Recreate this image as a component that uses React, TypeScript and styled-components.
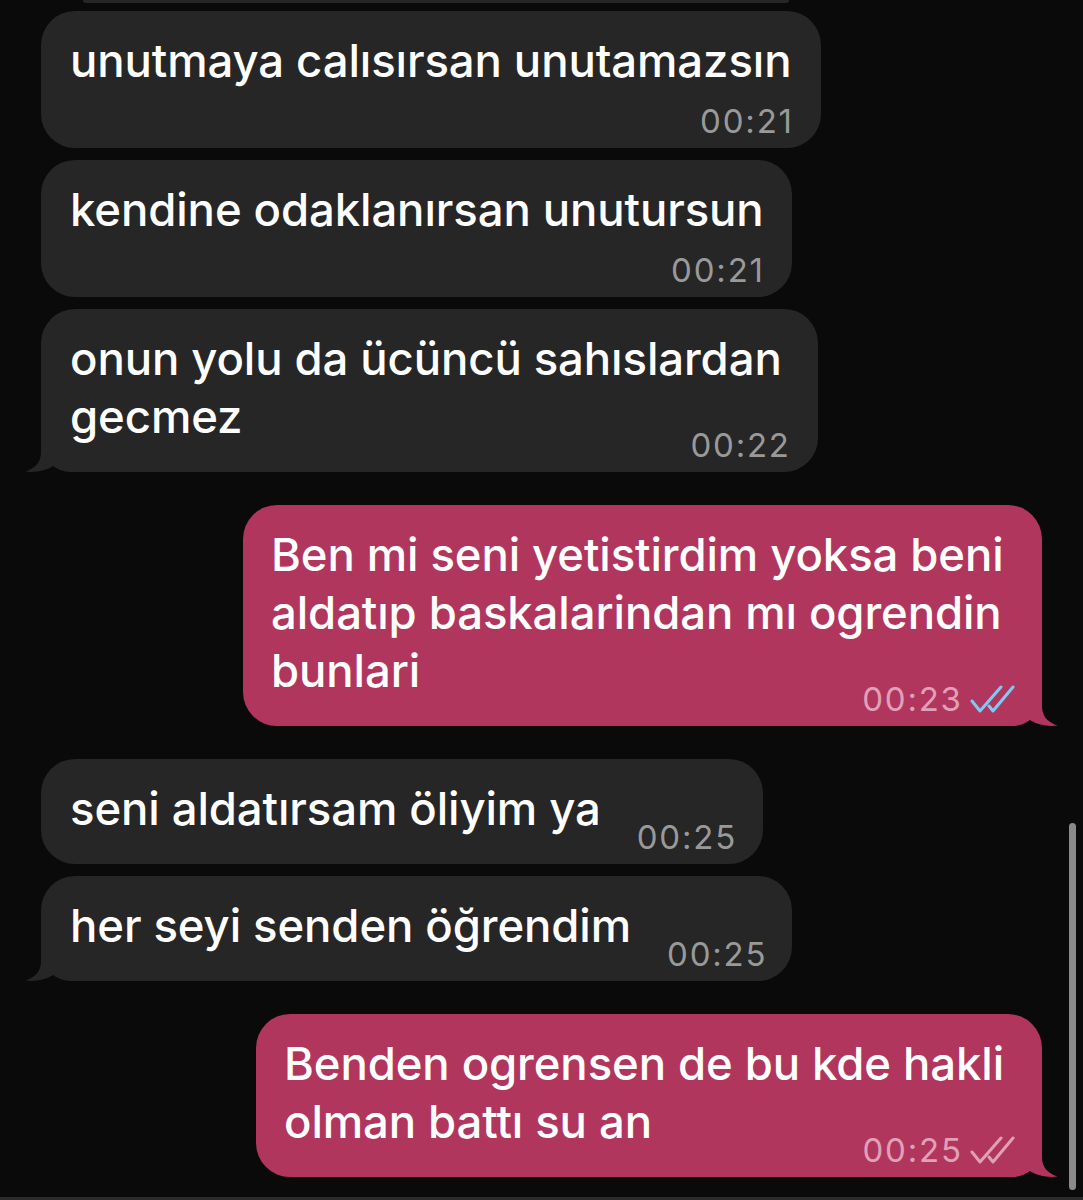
import React, { FC } from 'react';
import styled, { createGlobalStyle } from 'styled-components';

const COLORS = {
  BG: '#0a0a0a',
  INCOMING: '#262626',
  OUTGOING: '#b0365d',
  TIME_IN: '#999999',
  TIME_OUT: '#e0a0b8',
  CHECK_READ: '#7ecaf4',
  SCROLL: '#8a8a8a',
  INPUT_EDGE: '#2b2b2b'
};

const FONT = `Inter, 'Noto Sans', 'Liberation Sans', sans-serif`;

type Sender = 'in' | 'out';
type CheckState = 'read' | 'sent' | null;

interface Message {
  id: number;
  from: Sender;
  lines: string[];
  time: string;
  width: number;
  timeOwnLine?: boolean;
  tail?: boolean;
  check?: CheckState;
  gapTop: number;
}

const MESSAGES: Message[] = [
  {
    id: 1,
    from: 'in',
    lines: ['unutmaya calısırsan unutamazsın'],
    time: '00:21',
    width: 780,
    timeOwnLine: true,
    gapTop: 8
  },
  {
    id: 2,
    from: 'in',
    lines: ['kendine odaklanırsan unutursun'],
    time: '00:21',
    width: 751,
    timeOwnLine: true,
    gapTop: 12
  },
  {
    id: 3,
    from: 'in',
    lines: ['onun yolu da ücüncü sahıslardan', 'gecmez'],
    time: '00:22',
    width: 777,
    tail: true,
    gapTop: 12
  },
  {
    id: 4,
    from: 'out',
    lines: ['Ben mi seni yetistirdim yoksa beni', 'aldatıp baskalarindan mı ogrendin', 'bunlari'],
    time: '00:23',
    width: 799,
    tail: true,
    check: 'read',
    gapTop: 33
  },
  {
    id: 5,
    from: 'in',
    lines: ['seni aldatırsam öliyim ya'],
    time: '00:25',
    width: 722,
    gapTop: 33
  },
  {
    id: 6,
    from: 'in',
    lines: ['her seyi senden öğrendim'],
    time: '00:25',
    width: 751,
    tail: true,
    gapTop: 12
  },
  {
    id: 7,
    from: 'out',
    lines: ['Benden ogrensen de bu kde hakli', 'olman battı su an'],
    time: '00:25',
    width: 786,
    tail: true,
    check: 'sent',
    gapTop: 33
  }
];

const GlobalStyle = createGlobalStyle`
  html, body {
    margin: 0;
    padding: 0;
    background: ${COLORS.BG};
  }
  * {
    box-sizing: border-box;
  }
`;

const Screen = styled.div`
  position: relative;
  height: 1200px;
  overflow: hidden;
  background: ${COLORS.BG};
  padding: 0 41px;
  display: flex;
  flex-direction: column;
  font-family: ${FONT};
  -webkit-font-smoothing: antialiased;
`;

const PrevBubbleEdge = styled.div`
  height: 3px;
  width: 706px;
  margin-left: 42px;
  background: ${COLORS.INCOMING};
  border-radius: 0 0 3px 3px;
  flex-shrink: 0;
`;

const Row = styled.div<{ $from: Sender; $gap: number }>`
  display: flex;
  justify-content: ${(p) => (p.$from === 'out' ? 'flex-end' : 'flex-start')};
  margin-top: ${(p) => p.$gap}px;
  flex-shrink: 0;
`;

const Bubble = styled.div<{ $from: Sender; $width: number; $tail: boolean }>`
  position: relative;
  width: ${(p) => p.$width}px;
  background: ${(p) => (p.$from === 'out' ? COLORS.OUTGOING : COLORS.INCOMING)};
  border-radius: 34px;
  ${(p) => (p.$tail && p.$from === 'in' ? 'border-bottom-left-radius: 30px;' : '')}
  ${(p) => (p.$tail && p.$from === 'out' ? 'border-bottom-right-radius: 30px;' : '')}
  padding: 21px ${(p) => (p.$from === 'out' ? 27 : 29)}px 9px ${(p) => (p.$from === 'out' ? 28 : 29)}px;
  display: flex;
  flex-direction: column;
`;

const Line = styled.div`
  color: #ffffff;
  font-size: 45.5px;
  line-height: 58px;
  font-weight: 500;
  letter-spacing: -0.1px;
  white-space: nowrap;
`;

const LastLine = styled.div`
  display: flex;
  align-items: flex-end;
  justify-content: space-between;
  gap: 36px;
`;

const LastLineText = styled(Line)`
  padding-bottom: 17px;
`;

const Meta = styled.div<{ $from: Sender; $ownLine: boolean }>`
  display: flex;
  align-items: center;
  justify-content: flex-end;
  gap: 9px;
  margin-top: ${(p) => (p.$ownLine ? 13 : 0)}px;
  color: ${(p) => (p.$from === 'out' ? COLORS.TIME_OUT : COLORS.TIME_IN)};
  font-size: 33px;
  line-height: 36px;
  font-weight: 400;
  flex-shrink: 0;
`;

const Time = styled.span`
  letter-spacing: 1.8px;
  margin-right: -1.8px;
`;

const Tail = styled.svg<{ $from: Sender }>`
  position: absolute;
  bottom: 0;
  width: 60px;
  height: 44px;
  ${(p) => (p.$from === 'in' ? 'left: -16px;' : 'right: -16px; transform: scaleX(-1);')}
`;

const ScrollThumb = styled.div`
  position: absolute;
  right: 7px;
  top: 823px;
  width: 7px;
  height: 367px;
  border-radius: 4px;
  background: ${COLORS.SCROLL};
`;

const InputEdge = styled.div`
  margin: auto -41px 0;
  height: 3px;
  background: ${COLORS.INPUT_EDGE};
  flex-shrink: 0;
`;

const BubbleTail: FC<{ from: Sender }> = ({ from }) => (
  <Tail $from={from} viewBox="0 0 60 44">
    <path
      d="M16 2 L16 24 C16 33 12 39.5 0.5 43.6 C 11 44.8 21 42.6 28.2 38 L 40 20 Z"
      fill={from === 'out' ? COLORS.OUTGOING : COLORS.INCOMING}
    />
  </Tail>
);

const Checks: FC<{ state: CheckState }> = ({ state }) => {
  const color = state === 'read' ? COLORS.CHECK_READ : COLORS.TIME_OUT;
  return (
    <svg width="45" height="28" viewBox="0 0 45 28" fill="none">
      <path
        d="M2 16 L10 26 L31 2"
        stroke={color}
        strokeWidth="3"
        strokeLinecap="round"
        strokeLinejoin="round"
      />
      <path
        d="M19 21 L23 26 L43 2"
        stroke={color}
        strokeWidth="3"
        strokeLinecap="round"
        strokeLinejoin="round"
      />
    </svg>
  );
};

const MetaInfo: FC<{ msg: Message; ownLine: boolean }> = ({ msg, ownLine }) => (
  <Meta $from={msg.from} $ownLine={ownLine}>
    <Time>{msg.time}</Time>
    {msg.check && <Checks state={msg.check} />}
  </Meta>
);

const ChatBubble: FC<{ msg: Message }> = ({ msg }) => {
  const ownLine = !!msg.timeOwnLine;
  const head = ownLine ? msg.lines : msg.lines.slice(0, -1);
  const last = msg.lines[msg.lines.length - 1];
  return (
    <Row $from={msg.from} $gap={msg.gapTop}>
      <Bubble $from={msg.from} $width={msg.width} $tail={!!msg.tail}>
        {msg.tail && <BubbleTail from={msg.from} />}
        {head.map((line, i) => (
          <Line key={i}>{line}</Line>
        ))}
        {ownLine ? (
          <MetaInfo msg={msg} ownLine />
        ) : (
          <LastLine>
            <LastLineText>{last}</LastLineText>
            <MetaInfo msg={msg} ownLine={false} />
          </LastLine>
        )}
      </Bubble>
    </Row>
  );
};

const App: FC = () => (
  <>
    <GlobalStyle />
    <Screen>
      <PrevBubbleEdge />
      {MESSAGES.map((m) => (
        <ChatBubble key={m.id} msg={m} />
      ))}
      <InputEdge />
      <ScrollThumb />
    </Screen>
  </>
);

export default App;
